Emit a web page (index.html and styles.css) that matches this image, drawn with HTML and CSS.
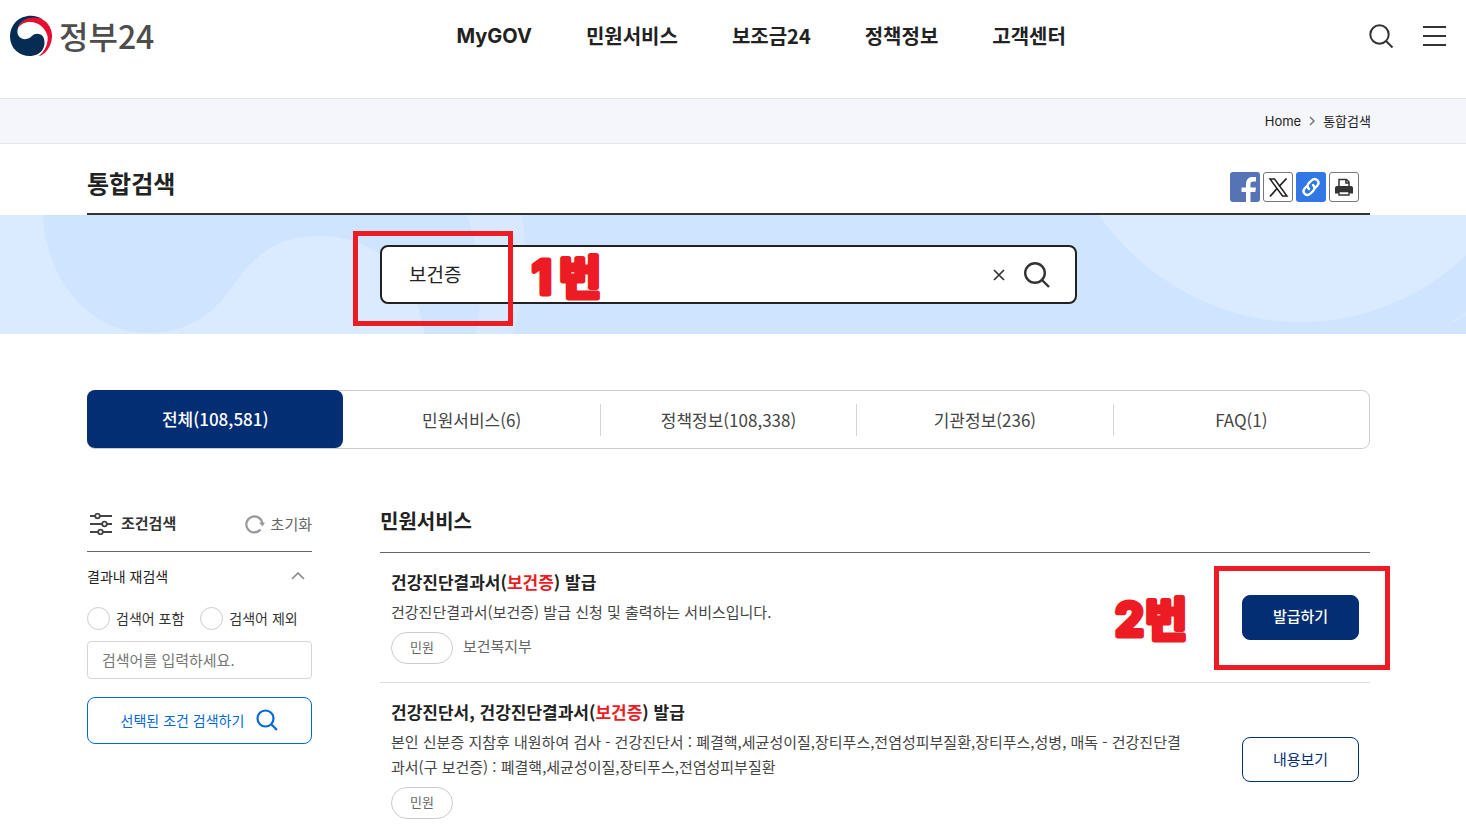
FILE: index.html
```html
<!DOCTYPE html>
<html lang="ko">
<head>
<meta charset="utf-8">
<meta name="viewport" content="width=device-width, initial-scale=1">
<title>통합검색 | 정부24</title>
<link rel="stylesheet" href="styles.css">
</head>
<body>
<header class="header">
  <a class="logo" href="#">
    <svg class="logo-mark" viewBox="30 46 127 127" aria-hidden="true">
      <path fill="#052c52" d="M130 59C104 42 68 45 47 67C23 92 25 134 49 155C75 178 116 174 130 148C137 134 136 113 124 106C113 100 104 102 97 109C88 119 75 122 64 116C53 110 50 98 54 87C60 63 91 48 130 59Z"/>
      <path fill="#e60f31" d="M54 87C60 64 88 48 120 56C145 65 158 88 157 113C155 142 137 166 116 171C138 153 147 128 143 108C136 79 106 62 81 68C67 72 58 78 54 87Z"/>
    </svg>
    <span>정부24</span>
  </a>
  <nav class="nav">
    <a class="latin" href="#">MyGOV</a>
    <a href="#">민원서비스</a>
    <a href="#">보조금24</a>
    <a href="#">정책정보</a>
    <a href="#">고객센터</a>
  </nav>
  <div class="tools">
    <button type="button" aria-label="검색">
      <svg width="26" height="26" viewBox="0 0 26 26"><circle cx="11.5" cy="11.5" r="9.2"/><path d="M18 18l6.500 6.500"/></svg>
    </button>
    <button type="button" aria-label="전체메뉴">
      <svg width="24" height="24" viewBox="0 0 24 24"><path d="M1 3h23M1 12h23M1 21h23"/></svg>
    </button>
  </div>
</header>

<div class="breadcrumb">
  <a class="latin" href="#">Home</a>
  <svg width="8" height="10" viewBox="0 0 8 10" aria-hidden="true"><path d="M2 1l4 4-4 4"/></svg>
  <span>통합검색</span>
</div>

<div class="title-row">
  <h1>통합검색</h1>
  <div class="share">
    <button class="facebook" type="button" aria-label="페이스북 공유">
      <svg viewBox="0 0 30 30"><path fill="#fff" d="M16 30V20h-4.500v-4.500H16v-3C16 7.500 18.500 5 22.500 5H26v4.500h-2.700c-2.300 0-2.800 1-2.800 2.500v3.500H26l-.7 4.500h-4.800v10z"/></svg>
    </button>
    <button class="outlined" type="button" aria-label="X 공유">
      <svg viewBox="0 0 28 28" fill="none" stroke="#222"><path stroke-width="1.500" d="M6 6h4.500l12.500 17h-4.500z"/><path stroke-width="1.800" d="M22.500 5.500l-7.500 8M13 15.500l-7 8"/></svg>
    </button>
    <button class="link" type="button" aria-label="링크 복사">
      <svg viewBox="0 0 30 30" fill="none" stroke="#fff" stroke-width="2.400" stroke-linecap="round"><path d="M13 17c-2-1.800-1.800-4.200-.2-5.800l2.700-2.700c4-3.800 9.300 1 5.700 5.200L19.500 15.500"/><path d="M17 13c2 1.800 1.800 4.200.2 5.800l-2.700 2.700c-4 3.800-9.300-1-5.700-5.200l1.700-1.800"/></svg>
    </button>
    <button class="outlined" type="button" aria-label="인쇄">
      <svg viewBox="0 0 28 28"><path fill="none" stroke="#333" stroke-width="1.500" d="M9 14V6.500h7.500L19 9v5M16 6.500V10h3"/><path fill="#333" d="M7 13h14c1.300 0 2 1 2 2v5.500H5V15c0-1 .7-2 2-2z"/><path fill="#fff" stroke="#333" stroke-width="1.400" d="M9 18.500h10V22H9z"/></svg>
    </button>
  </div>
</div>

<section class="banner">
  <svg class="banner-art" viewBox="0 0 1466 119" preserveAspectRatio="none" aria-hidden="true">
    <path fill="#cfe5ff" d="M43 0C45 62 88 118 147 118C188 118 214 100 235 68C262 31 286 21 320 21C376 21 419 62 424 119H1466V0z"/>
    <path fill="#d8e9ff" d="M467 0Q488 63 476 119H513Q531 58 522 0z"/>
    <path fill="#daebff" d="M1099 0C1149 71 1227 107 1299 107C1364 107 1422 82 1466 40V0z"/>
    <path fill="#d5e8ff" d="M1440 113Q1454 106 1466 97V101Q1455 108 1440 113z"/>
  </svg>
  <form class="search">
    <input type="text" value="보건증" aria-label="검색어">
    <button type="reset" aria-label="지우기">
      <svg class="clear" width="12" height="12" viewBox="0 0 12 12"><path d="M1 1l10 10M11 1L1 11"/></svg>
    </button>
    <button type="button" aria-label="검색">
      <svg width="28" height="28" viewBox="0 0 28 28"><circle cx="12" cy="12" r="9.800"/><path d="M19 19l7 7"/></svg>
    </button>
    <span class="mark-box mark-box-first"></span>
    <svg class="mark-text mark-text-first" width="80" height="56" viewBox="0 0 80 56"><text x="1" y="43">1</text><text x="28" y="43">번</text></svg>
  </form>
</section>

<nav class="tabs">
  <a class="active" href="#">전체(108,581)</a>
  <a href="#">민원서비스(6)</a>
  <a href="#">정책정보(108,338)</a>
  <a href="#">기관정보(236)</a>
  <a href="#">FAQ(1)</a>
</nav>

<div class="content">
  <aside class="filter">
    <div class="filter-head">
      <svg width="22" height="22" viewBox="0 0 22 22" fill="none" stroke="#444" stroke-width="1.800" aria-hidden="true"><path d="M0 3h5M10 3h12M0 11h12M17 11h5M0 19h8M13 19h9"/><circle cx="7.500" cy="3" r="2.300"/><circle cx="14.500" cy="11" r="2.300"/><circle cx="10.500" cy="19" r="2.300"/></svg>
      <h2>조건검색</h2>
      <button class="reset" type="button">
        <svg width="20" height="20" viewBox="0 0 20 20" aria-hidden="true"><path fill="none" stroke="#999" stroke-width="2.200" d="M17.300 9.500A8 8 0 1 0 15.500 15.500"/><path fill="#999" d="M14 8.500h6l-2.500 4z"/></svg>
        초기화
      </button>
    </div>
    <button class="fold" type="button">결과내 재검색
      <svg width="14" height="8" viewBox="0 0 14 8" fill="none" stroke="#888" stroke-width="1.600" aria-hidden="true"><path d="M1 7l6-6 6 6"/></svg>
    </button>
    <div class="radios">
      <label><input type="radio" name="mode">검색어 포함</label>
      <label><input type="radio" name="mode">검색어 제외</label>
    </div>
    <input class="keyword" type="text" placeholder="검색어를 입력하세요." aria-label="재검색어">
    <button class="apply" type="button">선택된 조건 검색하기
      <svg width="22" height="22" viewBox="0 0 22 22" fill="none" stroke="#0468d7" stroke-width="2.200" aria-hidden="true"><circle cx="9.500" cy="9.500" r="8"/><path d="M15 15l6 6"/></svg>
    </button>
  </aside>

  <main class="results">
    <h2>민원서비스</h2>
    <ul>
      <li>
        <div class="info">
          <h3><a href="#">건강진단결과서(<em>보건증</em>) 발급</a></h3>
          <p>건강진단결과서(보건증) 발급 신청 및 출력하는 서비스입니다.</p>
          <div class="meta"><span class="badge">민원</span><span>보건복지부</span></div>
        </div>
        <div class="action">
          <button class="primary" type="button">발급하기</button>
          <span class="mark-box mark-box-second"></span>
          <svg class="mark-text mark-text-second" width="84" height="56" viewBox="0 0 84 56"><text x="1" y="43">2</text><text x="31" y="43">번</text></svg>
        </div>
      </li>
      <li>
        <div class="info">
          <h3><a href="#">건강진단서, 건강진단결과서(<em>보건증</em>) 발급</a></h3>
          <p>본인 신분증 지참후 내원하여 검사 - 건강진단서 : 폐결핵,세균성이질,장티푸스,전염성피부질환,장티푸스,성병, 매독 - 건강진단결<br>과서(구 보건증) : 폐결핵,세균성이질,장티푸스,전염성피부질환</p>
          <div class="meta"><span class="badge">민원</span></div>
        </div>
        <div class="action">
          <button type="button">내용보기</button>
        </div>
      </li>
    </ul>
  </main>
</div>
</body>
</html>
```
FILE: styles.css
```css
* {
  box-sizing: border-box;
}

body {
  margin: 0;
  background: #fff;
  color: #222;
  font: 15px/24px "Noto Sans CJK KR", sans-serif;
}

a {
  color: inherit;
  text-decoration: none;
}

button,
input {
  font: inherit;
  color: inherit;
}

button {
  padding: 0;
  border: 0;
  background: none;
  cursor: pointer;
}

h1, h2, h3, p, ul {
  margin: 0;
  padding: 0;
}

svg {
  display: block;
}

.latin {
  font-family: Inter, "Noto Sans CJK KR", sans-serif;
}

.header {
  display: flex;
  align-items: center;
  height: 98px;
  padding: 0 20px 26px 10px;
}

.logo {
  display: flex;
  align-items: center;
  gap: 7px;
  color: #4d4d4d;
  font-size: 32px;
  line-height: 40px;
  font-weight: 500;
}

.logo span {
  padding-bottom: 2px;
}

.logo-mark {
  width: 42px;
  height: 42px;
}

.nav {
  flex: 1;
  display: flex;
  justify-content: center;
  gap: 54px;
  font-size: 20px;
  font-weight: 700;
}

.tools {
  display: flex;
  align-items: center;
  gap: 28px;
}

.tools svg,
.search button svg {
  fill: none;
  stroke: #333;
  stroke-width: 2;
}

.breadcrumb {
  display: flex;
  align-items: center;
  justify-content: flex-end;
  gap: 7px;
  height: 46px;
  padding: 0 95px 0 87px;
  border: solid #e3e5ee;
  border-width: 1px 0;
  background: #f5f6fb;
  font-size: 13px;
}

.breadcrumb svg {
  fill: none;
  stroke: #777;
  stroke-width: 1.5;
}

.title-row {
  display: flex;
  align-items: center;
  justify-content: space-between;
  height: 71px;
  margin: 0 96px 0 87px;
  padding: 17px 11px 0 0;
  border-bottom: 2px solid #333;
}

.title-row h1 {
  padding-bottom: 8px;
  font-size: 24px;
  line-height: 34px;
}

.share {
  display: flex;
  gap: 3px;
}

.share button {
  width: 30px;
  height: 30px;
  border-radius: 3px;
  overflow: hidden;
}

.share .facebook {
  background: #5673b5;
}

.share .link {
  background: #3178e6;
}

.share .outlined {
  border: 1px solid #777;
}

.banner {
  position: relative;
  display: flex;
  justify-content: center;
  padding: 30px 96px 30px 87px;
  background: #dbebff;
}

.banner-art {
  position: absolute;
  inset: 0;
  width: 100%;
  height: 100%;
}

.search {
  position: relative;
  display: flex;
  align-items: center;
  width: 100%;
  max-width: 697px;
  height: 59px;
  padding: 0 24px 0 27px;
  gap: 18px;
  border: 2px solid #222;
  border-radius: 8px;
  background: #fff;
}

.search input {
  flex: 1;
  min-width: 0;
  padding: 0 0 2px;
  border: 0;
  outline: 0;
  background: none;
  font-size: 19px;
}

.search button svg {
  stroke-width: 2.4;
}

.search button .clear {
  stroke-width: 1.7;
}

.mark-box {
  position: absolute;
  border: 5px solid #ed1c24;
  pointer-events: none;
}

.mark-text {
  position: absolute;
  fill: #ed1c24;
  stroke: #ed1c24;
  stroke-width: 5;
  stroke-linejoin: round;
  font: 700 46px Inter, "Noto Sans CJK KR", sans-serif;
  overflow: visible;
  pointer-events: none;
}

.mark-box-first {
  top: -16px;
  left: -29px;
  width: 160px;
  height: 95px;
}

.mark-text-first {
  top: 4px;
  left: 149px;
}

.tabs {
  display: flex;
  height: 59px;
  margin: 56px 96px 0 87px;
  border: 1px solid #ccc;
  border-radius: 8px;
  color: #444;
  font-size: 17px;
}

.tabs a {
  flex: 1;
  display: flex;
  align-items: center;
  justify-content: center;
}

.tabs a + a + a::before {
  content: "";
  width: 1px;
  height: 32px;
  margin-right: auto;
  background: #d5d5d5;
}

.tabs a + a + a::after {
  content: "";
  margin-left: auto;
}

.tabs .active {
  margin: -1px 0 0 -1px;
  border-radius: 8px;
  background: #032e73;
  color: #fff;
  font-weight: 500;
}

.content {
  display: flex;
  align-items: flex-start;
  gap: 68px;
  margin: 47px 96px 0 87px;
}

.filter {
  flex: 0 0 225px;
  font-size: 14px;
}

.filter-head {
  display: flex;
  align-items: center;
  height: 56px;
  padding-left: 3px;
  border-bottom: 1px solid #666;
}

.filter-head h2 {
  margin-left: 9px;
  padding-bottom: 2px;
  color: #333;
  font-size: 15px;
}

.reset {
  display: flex;
  align-items: center;
  gap: 6px;
  margin-left: auto;
  color: #666;
  font-size: 15px;
}

.fold {
  display: flex;
  align-items: center;
  justify-content: space-between;
  width: 100%;
  padding: 12px 7px 12px 0;
}

.radios {
  display: flex;
  gap: 16px;
  margin: 6px 0 10px;
  color: #333;
}

.radios label {
  display: flex;
  align-items: center;
  gap: 6px;
}

.radios input {
  appearance: none;
  width: 23px;
  height: 23px;
  margin: 0;
  border: 1px solid #ccc;
  border-radius: 50%;
}

.radios input:checked {
  border: 7px solid #0468d7;
}

.keyword {
  display: block;
  width: 100%;
  height: 38px;
  margin-top: 11px;
  padding: 0 14px 2px;
  border: 1px solid #d5d5d5;
  border-radius: 4px;
  font-size: 15px;
}

.keyword::placeholder {
  color: #777;
}

.apply {
  display: flex;
  align-items: center;
  justify-content: center;
  gap: 12px;
  width: 100%;
  height: 47px;
  margin-top: 18px;
  padding-bottom: 2px;
  border: 1px solid #0468d7;
  border-radius: 8px;
  color: #0468d7;
}

.results {
  flex: 1;
  min-width: 0;
}

.results h2 {
  height: 57px;
  padding-top: 10px;
  border-bottom: 1px solid #666;
  font-size: 20px;
  line-height: 30px;
}

.results ul {
  list-style: none;
}

.results li {
  display: flex;
  align-items: center;
  justify-content: space-between;
  gap: 24px;
  padding: 15px 11px 18px;
  border-bottom: 1px solid #ddd;
}

.results li:last-child {
  padding-bottom: 14px;
  border-bottom: 0;
}

.results h3 {
  font-size: 17px;
  line-height: 28px;
}

.results em {
  color: #ed1c24;
  font-style: normal;
}

.results p {
  margin-top: 3px;
  color: #444;
  line-height: 25px;
}

.meta {
  display: flex;
  gap: 10px;
  margin-top: 8px;
  color: #666;
  line-height: 28px;
}

.badge {
  height: 32px;
  padding: 0 18px;
  border: 1px solid #ccc;
  border-radius: 16px;
  font-size: 13px;
}

.action {
  position: relative;
  padding-top: 2px;
}

.action button {
  display: block;
  width: 117px;
  height: 45px;
  padding-bottom: 2px;
  border: 1px solid #032e73;
  border-radius: 8px;
  color: #032e73;
}

.action .primary {
  background: #032e73;
  color: #fff;
  font-weight: 500;
}

.mark-box-second {
  top: -27px;
  left: -28px;
  width: 176px;
  height: 104px;
}

.mark-text-second {
  top: 0;
  left: -128px;
}
```
